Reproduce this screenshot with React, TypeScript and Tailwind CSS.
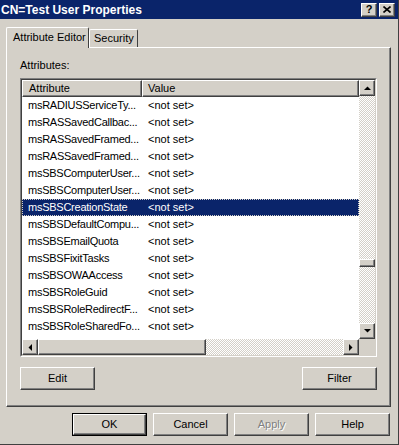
import { ReactNode } from 'react'

const raised =
  'border border-t-white border-l-white border-r-[#404040] border-b-[#404040] shadow-[inset_-1px_-1px_#808080] bg-[#d4d0c8]'

const checker =
  'bg-[conic-gradient(#ffffff_25%,#d4d0c8_0_50%,#ffffff_0_75%,#d4d0c8_0)] bg-[length:2px_2px]'

const rows = [
  'msRADIUSServiceTy...',
  'msRASSavedCallbac...',
  'msRASSavedFramed...',
  'msRASSavedFramed...',
  'msSBSComputerUser...',
  'msSBSComputerUser...',
  'msSBSCreationState',
  'msSBSDefaultCompu...',
  'msSBSEmailQuota',
  'msSBSFixitTasks',
  'msSBSOWAAccess',
  'msSBSRoleGuid',
  'msSBSRoleRedirectF...',
  'msSBSRoleSharedFo...',
  'msSBSRoleSharedL...',
]

function Arrow({ dir }: { dir: 'up' | 'down' | 'left' | 'right' }) {
  const pts = {
    up: '0,4 7,4 3.5,0.5',
    down: '0,0 7,0 3.5,3.5',
    left: '4,0 4,7 0.5,3.5',
    right: '0,0 0,7 3.5,3.5',
  }[dir]
  const vertical = dir === 'up' || dir === 'down'
  return (
    <svg width={vertical ? 7 : 4} height={vertical ? 4 : 7} viewBox={vertical ? '0 0 7 4' : '0 0 4 7'}>
      <polygon points={pts} fill="#000" />
    </svg>
  )
}

function ScrollBtn({ dir }: { dir: 'up' | 'down' | 'left' | 'right' }) {
  return (
    <div className={`${raised} w-[16px] h-[16px] shrink-0 flex items-center justify-center`}>
      <Arrow dir={dir} />
    </div>
  )
}

function Button({ children, primary, disabled }: { children: ReactNode; primary?: boolean; disabled?: boolean }) {
  const inner = (
    <div
      className={`${raised} w-full h-full flex items-center justify-center ${
        disabled ? 'text-[#808080] [text-shadow:1px_1px_0_#ffffff]' : 'text-black'
      }`}
    >
      {children}
    </div>
  )
  if (primary) {
    return <div className="w-[75px] h-[23px] border border-black">{inner}</div>
  }
  return <div className="w-[75px] h-[23px]">{inner}</div>
}

export default function App() {
  return (
    <div
      className="w-[399px] h-[445px] bg-[#d4d0c8] border-r border-b border-[#404040] overflow-hidden text-[11px] text-black"
      style={{ fontFamily: '"Liberation Sans", Arial, sans-serif' }}
    >
      {/* title bar */}
      <div className="h-[19px] bg-[#0a246a] flex items-center justify-between pl-[1px] pr-[3px]">
        <span className="text-white font-bold text-[12px] leading-none">CN=Test User Properties</span>
        <div className="flex gap-[2px]">
          <div className={`${raised} w-[16px] h-[14px] flex items-center justify-center font-bold text-[11px] leading-none`}>
            ?
          </div>
          <div className={`${raised} w-[16px] h-[14px] flex items-center justify-center`}>
            <svg width="8" height="7" viewBox="0 0 8 7">
              <path d="M0.5 0.5 L7.5 6.5 M7.5 0.5 L0.5 6.5" stroke="#000" strokeWidth="1.6" />
            </svg>
          </div>
        </div>
      </div>

      <div className="pl-[6px]">
        {/* tabs */}
        <div className="flex items-start h-[20px] mt-[8px]">
          <div className="relative z-10 w-[83px] h-[21px] bg-[#d4d0c8] border-t border-l border-white border-r border-r-[#404040] rounded-t-[2px] flex items-center pl-[6px] pb-[2px] whitespace-nowrap">
            Attribute Editor
          </div>
          <div className="mt-[2px] w-[49px] h-[18px] border-t border-l border-white border-r border-r-[#404040] rounded-t-[2px] flex items-center pl-[4px] whitespace-nowrap">
            Security
          </div>
        </div>

        {/* panel */}
        <div className="w-[385px] h-[360px] border border-t-white border-l-white border-r-[#404040] border-b-[#404040] shadow-[inset_-1px_-1px_#808080] px-[13px] pt-[11px]">
          <div className="h-[13px] leading-[13px]">Attributes:</div>
          <div className="mt-[6px] w-[357px] h-[279px] border border-t-[#808080] border-l-[#808080] border-r-white border-b-white">
            <div className="w-full h-full border border-t-[#404040] border-l-[#404040] border-r-[#d4d0c8] border-b-[#d4d0c8] flex flex-col bg-white">
              <div className="flex h-[259px]">
                <div className="flex-1 overflow-hidden">
                  <div className="flex h-[17px]">
                    <div className={`${raised} w-[120px] h-full flex items-center pl-[6px]`}>Attribute</div>
                    <div className={`${raised} flex-1 h-full flex items-center pl-[5px]`}>Value</div>
                  </div>
                  {rows.map((r, i) => (
                    <div
                      key={i}
                      className={`flex h-[17px] items-center ${
                        i === 6
                          ? 'bg-[#0a246a] text-white outline-1 outline-dotted outline-[#d4d0c8] -outline-offset-1'
                          : ''
                      }`}
                    >
                      <div className="w-[120px] shrink-0 pl-[6px] whitespace-nowrap tracking-[-0.25px]">{r}</div>
                      <div className="pl-[6px] whitespace-nowrap">&lt;not set&gt;</div>
                    </div>
                  ))}
                </div>
                <div className="w-[16px] flex flex-col">
                  <ScrollBtn dir="up" />
                  <div className={`flex-1 ${checker}`}>
                    <div className="h-[163px]" />
                    <div className={`${raised} h-[8px]`} />
                  </div>
                  <ScrollBtn dir="down" />
                </div>
              </div>
              <div className="flex h-[16px]">
                <ScrollBtn dir="left" />
                <div className={`${raised} w-[168px] h-full`} />
                <div className={`flex-1 ${checker}`} />
                <ScrollBtn dir="right" />
                <div className="w-[16px] bg-[#d4d0c8]" />
              </div>
            </div>
          </div>
          <div className="mt-[10px] flex justify-between">
            <Button>Edit</Button>
            <Button>Filter</Button>
          </div>
        </div>

        {/* dialog buttons */}
        <div className="mt-[6px] flex justify-end gap-[6px] pr-[8px]">
          <Button primary>OK</Button>
          <Button>Cancel</Button>
          <Button disabled>Apply</Button>
          <Button>Help</Button>
        </div>
      </div>
    </div>
  )
}
